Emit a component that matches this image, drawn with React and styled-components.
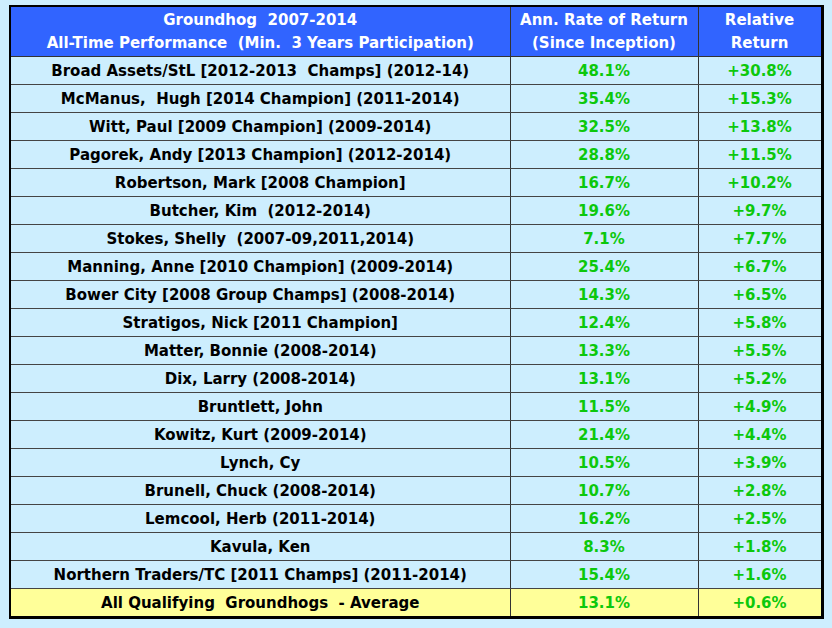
import React from 'react';
import styled, { createGlobalStyle } from 'styled-components';

const GlobalStyle = createGlobalStyle`
  html, body {
    margin: 0;
    background: #cdeefe;
  }
  body {
    padding: 5px 0 0 9px;
    font-family: Tahoma, "DejaVu Sans", sans-serif;
  }
`;

const rows = [
  ['Broad Assets/StL [2012-2013  Champs] (2012-14)', '48.1%', '+30.8%'],
  ['McManus,  Hugh [2014 Champion] (2011-2014)', '35.4%', '+15.3%'],
  ['Witt, Paul [2009 Champion] (2009-2014)', '32.5%', '+13.8%'],
  ['Pagorek, Andy [2013 Champion] (2012-2014)', '28.8%', '+11.5%'],
  ['Robertson, Mark [2008 Champion]', '16.7%', '+10.2%'],
  ['Butcher, Kim  (2012-2014)', '19.6%', '+9.7%'],
  ['Stokes, Shelly  (2007-09,2011,2014)', '7.1%', '+7.7%'],
  ['Manning, Anne [2010 Champion] (2009-2014)', '25.4%', '+6.7%'],
  ['Bower City [2008 Group Champs] (2008-2014)', '14.3%', '+6.5%'],
  ['Stratigos, Nick [2011 Champion]', '12.4%', '+5.8%'],
  ['Matter, Bonnie (2008-2014)', '13.3%', '+5.5%'],
  ['Dix, Larry (2008-2014)', '13.1%', '+5.2%'],
  ['Bruntlett, John', '11.5%', '+4.9%'],
  ['Kowitz, Kurt (2009-2014)', '21.4%', '+4.4%'],
  ['Lynch, Cy', '10.5%', '+3.9%'],
  ['Brunell, Chuck (2008-2014)', '10.7%', '+2.8%'],
  ['Lemcool, Herb (2011-2014)', '16.2%', '+2.5%'],
  ['Kavula, Ken', '8.3%', '+1.8%'],
  ['Northern Traders/TC [2011 Champs] (2011-2014)', '15.4%', '+1.6%'],
];

const Table = styled.table`
  border-collapse: collapse;
  table-layout: fixed;
  width: 814px;
  border-style: solid;
  border-color: #000;
  border-width: 2px 3px 3px 2px;
  font-weight: bold;
  font-size: 15px;
`;

const HeadCell = styled.th`
  background: #3164ff;
  color: #fff;
  height: 49px;
  padding: 0;
  line-height: 23px;
  text-align: center;
  white-space: pre;
  border-right: 1px solid #333;
  border-bottom: 1px solid #333;
  font-weight: bold;
`;

const Cell = styled.td`
  background: ${p => (p.$avg ? '#ffff99' : '#cdeefe')};
  color: ${p => (p.$num ? '#0cc80c' : '#000')};
  height: 27px;
  padding: 0;
  text-align: center;
  white-space: pre;
  border-right: 1px solid #333;
  border-bottom: 1px solid #444;
`;

export default function App() {
  return (
    <>
      <GlobalStyle />
      <Table>
        <colgroup>
          <col style={{ width: 500 }} />
          <col style={{ width: 188 }} />
          <col style={{ width: 124 }} />
        </colgroup>
        <thead>
          <tr>
            <HeadCell>{'Groundhog  2007-2014\nAll-Time Performance  (Min.  3 Years Participation)'}</HeadCell>
            <HeadCell>{'Ann. Rate of Return\n(Since Inception)'}</HeadCell>
            <HeadCell>{'Relative\nReturn'}</HeadCell>
          </tr>
        </thead>
        <tbody>
          {rows.map(([name, ann, rel]) => (
            <tr key={name}>
              <Cell>{name}</Cell>
              <Cell $num>{ann}</Cell>
              <Cell $num>{rel}</Cell>
            </tr>
          ))}
          <tr>
            <Cell $avg>{'All Qualifying  Groundhogs  - Average'}</Cell>
            <Cell $avg $num>13.1%</Cell>
            <Cell $avg $num>+0.6%</Cell>
          </tr>
        </tbody>
      </Table>
    </>
  );
}
